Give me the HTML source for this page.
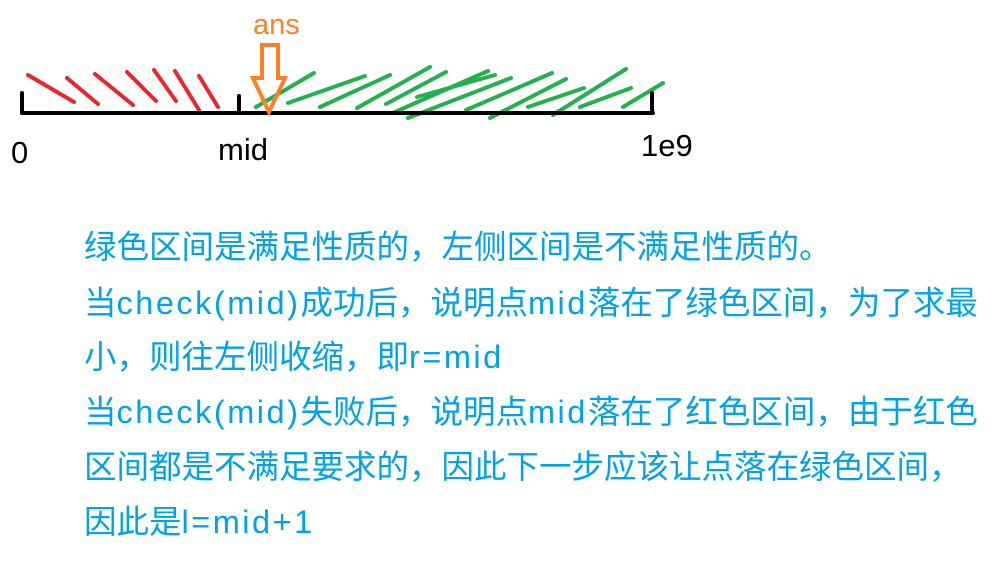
<!DOCTYPE html>
<html><head><meta charset="utf-8"><style>
html,body{margin:0;padding:0;background:#fff;width:994px;height:567px;overflow:hidden;position:relative}
.t{position:absolute;left:84px;font-family:"Liberation Sans","Noto Sans CJK SC",sans-serif;font-size:32.5px;color:#00a2e8;white-space:nowrap;line-height:40px}
.t span{letter-spacing:2.5px}
.l{position:absolute;font-family:"Liberation Sans",sans-serif;font-size:31px;color:#000;line-height:30px}
</style></head><body>
<svg width="994" height="200" style="position:absolute;left:0;top:0" fill="none" stroke-linecap="round">
<g stroke="#e8262b" stroke-width="4">
<line x1="28" y1="75" x2="74" y2="102"/>
<line x1="67" y1="78" x2="98" y2="104"/>
<line x1="95" y1="74" x2="133" y2="105"/>
<line x1="127" y1="72" x2="156" y2="101"/>
<line x1="154" y1="70" x2="176" y2="101"/>
<line x1="175" y1="71" x2="199" y2="110"/>
<line x1="199" y1="76" x2="218" y2="107"/>
</g>
<g stroke="#22b14c" stroke-width="4">
<line x1="256" y1="107" x2="314" y2="73"/>
<line x1="288" y1="103" x2="365" y2="76"/>
<line x1="320" y1="107" x2="390" y2="75"/>
<line x1="357" y1="108" x2="430" y2="67"/>
<line x1="386" y1="104" x2="446" y2="72"/>
<line x1="395" y1="112" x2="488" y2="71"/>
<line x1="417" y1="97" x2="495" y2="75"/>
<line x1="408" y1="118" x2="511" y2="78"/>
<line x1="466" y1="110" x2="552" y2="73"/>
<line x1="490" y1="118" x2="566" y2="79"/>
<line x1="528" y1="107" x2="584" y2="88"/>
<line x1="553" y1="115" x2="626" y2="69"/>
<line x1="580" y1="107" x2="631" y2="88"/>
<line x1="623" y1="107" x2="663" y2="83"/>
</g>
<g stroke="#000" stroke-width="4">
<line x1="22" y1="113" x2="653" y2="113"/>
<line x1="22" y1="93" x2="22" y2="113"/>
<line x1="239" y1="96" x2="239" y2="113"/>
<line x1="652" y1="93" x2="652" y2="113"/>
</g>
<path d="M262 45 H278 V78 H285 L269 112 L253 78 H262 Z" stroke="#ff7f27" stroke-width="4" stroke-linejoin="miter"/>
<text x="253" y="34" font-family="Liberation Sans,sans-serif" font-size="29" fill="#ff7f27" stroke="none">ans</text>
</svg>
<div class="l" style="left:11px;top:138px">0</div>
<div class="l" style="left:218px;top:135px">mid</div>
<div class="l" style="left:641px;top:131px">1e9</div>
<div class="t" style="top:227px">绿色区间是满足性质的，左侧区间是不满足性质的。</div>
<div class="t" style="top:283px">当<span>check(mid)</span>成功后，说明点<span>mid</span>落在了绿色区间，为了求最</div>
<div class="t" style="top:337px">小，则往左侧收缩，即<span>r=mid</span></div>
<div class="t" style="top:392px">当<span>check(mid)</span>失败后，说明点<span>mid</span>落在了红色区间，由于红色</div>
<div class="t" style="top:447px">区间都是不满足要求的，因此下一步应该让点落在绿色区间，</div>
<div class="t" style="top:502px">因此是<span>l=mid+1</span></div>
</body></html>
